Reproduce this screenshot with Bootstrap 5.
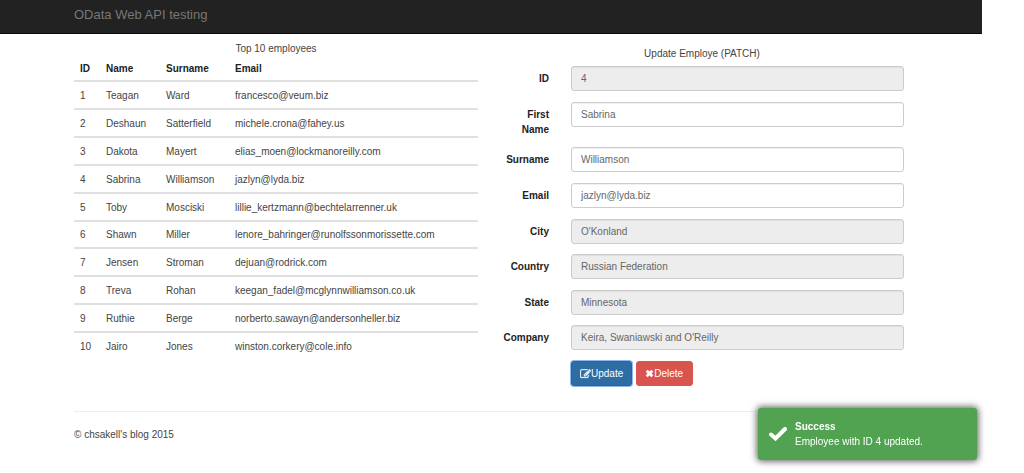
<!DOCTYPE html>
<html lang="en">
<head>
<meta charset="utf-8">
<meta name="viewport" content="width=device-width, initial-scale=1">
<title>OData Web API testing</title>
<link href="https://cdn.jsdelivr.net/npm/bootstrap@5.3.0/dist/css/bootstrap.min.css" rel="stylesheet">
<style>
  body { font: 10px/15px "Liberation Sans", Arial, sans-serif; color: #444; padding-right: 42px; background: #fff; }
  .site-bar { background: #222; border-bottom: 1px solid #080808; height: 34px; }
  .site-bar .navbar-brand { font-size: 13px; line-height: 18px; color: #777; }
  .page-width { max-width: 852px; padding-left: 11px; padding-right: 11px; }
  .page-body { padding-right: 4px; }
  .split { --bs-gutter-x: 22px; }
  .employees { height: 303px; color: inherit; caption-side: top; }
  .employees caption { color: inherit; padding: 7px 0 0; text-align: center; line-height: 15px; }
  .employees th, .employees td { padding: 5px 6px 4px; border-bottom: 0; border-top: 2px solid #e0e0e0; vertical-align: middle; line-height: 15px; }
  .employees thead th { border-top: 0; color: #222; }
  .employees tbody { border-top: 0; }
  .col-id { width: 26px; } .col-name { width: 60px; } .col-surname { width: 69px; }
  .form-title { padding-top: 12px; padding-bottom: 5px; }
  .edit-form { min-height: 320px; }
  .edit-form label { padding-top: 5px; padding-bottom: 0; font-size: 10px; font-weight: 700; line-height: 15px; color: #222; }
  .edit-form .form-control { height: 25px; padding: 4px 9px; font-size: 10px; line-height: 15px; color: #666; border-color: #ccc; border-radius: 3px; box-shadow: inset 0 1px 1px rgba(0,0,0,.06); }
  .edit-form .form-control[readonly] { background: #ededed; }
  .edit-form .btn { height: 25px; padding: 0 8px; font-size: 10px; line-height: 15px; border-radius: 3px; color: #fff; }
  .edit-form .btn-update { background: #2e6da4; border: 1px solid #28649b; box-shadow: 0 0 0 1px #8fb8ee; }
  .edit-form .btn-delete { background: #d9534f; border: 1px solid #d9534f; padding-right: 9px; }
  .page-rule { margin: 25px 0 15px; border-top: 1px solid #eee; opacity: 1; }
  .notice { right: 47px; bottom: 13px; width: 219px; padding: 11px; color: #fff; background: #51a351; border-radius: 3px; box-shadow: 0 0 7px 1px #555; }
</style>
</head>
<body>
<nav class="navbar site-bar p-0 pe-1">
  <div class="container-fluid page-width">
    <a class="navbar-brand p-0 m-0 mb-1" href="#">OData Web API testing</a>
  </div>
</nav>
<div class="page-body">
  <div class="container-fluid page-width">
    <main class="row split">
      <section class="col-6">
        <table class="table employees m-0">
          <caption>Top 10 employees</caption>
          <thead>
            <tr><th class="col-id">ID</th><th class="col-name">Name</th><th class="col-surname">Surname</th><th>Email</th></tr>
          </thead>
          <tbody>
            <tr><td>1</td><td>Teagan</td><td>Ward</td><td>francesco@veum.biz</td></tr>
            <tr><td>2</td><td>Deshaun</td><td>Satterfield</td><td>michele.crona@fahey.us</td></tr>
            <tr><td>3</td><td>Dakota</td><td>Mayert</td><td>elias_moen@lockmanoreilly.com</td></tr>
            <tr><td>4</td><td>Sabrina</td><td>Williamson</td><td>jazlyn@lyda.biz</td></tr>
            <tr><td>5</td><td>Toby</td><td>Mosciski</td><td>lillie_kertzmann@bechtelarrenner.uk</td></tr>
            <tr><td>6</td><td>Shawn</td><td>Miller</td><td>lenore_bahringer@runolfssonmorissette.com</td></tr>
            <tr><td>7</td><td>Jensen</td><td>Stroman</td><td>dejuan@rodrick.com</td></tr>
            <tr><td>8</td><td>Treva</td><td>Rohan</td><td>keegan_fadel@mcglynnwilliamson.co.uk</td></tr>
            <tr><td>9</td><td>Ruthie</td><td>Berge</td><td>norberto.sawayn@andersonheller.biz</td></tr>
            <tr><td>10</td><td>Jairo</td><td>Jones</td><td>winston.corkery@cole.info</td></tr>
          </tbody>
        </table>
      </section>
      <section class="col-6">
        <div class="form-title text-center">Update Employe (PATCH)</div>
        <form class="edit-form d-flex flex-column justify-content-between">
          <div class="row split"><label for="f-id" class="col-2 text-end">ID</label><div class="col-10"><input id="f-id" class="form-control" value="4" readonly></div></div>
          <div class="row split"><label for="f-first" class="col-2 text-end">First Name</label><div class="col-10"><input id="f-first" class="form-control" value="Sabrina"></div></div>
          <div class="row split"><label for="f-surname" class="col-2 text-end">Surname</label><div class="col-10"><input id="f-surname" class="form-control" value="Williamson"></div></div>
          <div class="row split"><label for="f-email" class="col-2 text-end">Email</label><div class="col-10"><input id="f-email" class="form-control" value="jazlyn@lyda.biz"></div></div>
          <div class="row split"><label for="f-city" class="col-2 text-end">City</label><div class="col-10"><input id="f-city" class="form-control" value="O'Konland" readonly></div></div>
          <div class="row split"><label for="f-country" class="col-2 text-end">Country</label><div class="col-10"><input id="f-country" class="form-control" value="Russian Federation" readonly></div></div>
          <div class="row split"><label for="f-state" class="col-2 text-end">State</label><div class="col-10"><input id="f-state" class="form-control" value="Minnesota" readonly></div></div>
          <div class="row split"><label for="f-company" class="col-2 text-end">Company</label><div class="col-10"><input id="f-company" class="form-control" value="Keira, Swaniawski and O'Reilly" readonly></div></div>
          <div class="row split">
            <div class="col-10 offset-2 d-flex gap-1">
              <button type="button" class="btn btn-update d-flex align-items-center"><svg width="11" height="10" viewBox="0 0 1792 1536" fill="currentColor" stroke="currentColor" stroke-width="50" aria-hidden="true"><path d="M888 1056l116-116-152-152-116 116v56h96v96zm440-720q-16-16-33 1L945 687q-17 17-1 33t33-1l350-350q17-17 1-33zm80 594v190q0 119-84 204t-204 84H288q-119 0-203-84T0 1120V288Q0 169 85 85T288 0h832q63 0 117 25 15 7 18 23 3 17-9 29l-49 49q-14 14-32 8-23-6-45-6H288q-66 0-113 47t-47 113v832q0 66 47 113t113 47h832q66 0 113-47t47-113V994q0-13 9-22l64-64q15-15 35-7t20 29zm-96-738l288 288-672 672H640V864zm444 132l-92 92-288-288 92-92q28-28 68-28t68 28l152 152q28 28 28 68t-28 68z"/></svg>Update</button>
              <button type="button" class="btn btn-delete d-flex align-items-center"><svg width="9" height="9" viewBox="0 0 16 16" aria-hidden="true"><path d="M3 3l10 10M13 3L3 13" stroke="currentColor" stroke-width="5" fill="none"/></svg>Delete</button>
            </div>
          </div>
        </form>
      </section>
    </main>
    <hr class="page-rule">
    <footer>© chsakell's blog 2015</footer>
  </div>
</div>
<div class="notice position-fixed d-flex align-items-center" role="status">
  <svg class="flex-shrink-0 me-2" width="18" height="14" viewBox="0 0 18 14" aria-hidden="true"><path d="M2 7.500l4.500 4L16 2" stroke="#fff" stroke-width="4" stroke-linecap="round" fill="none"/></svg>
  <div><strong class="d-block">Success</strong>Employee with ID 4 updated.</div>
</div>
<script src="https://cdn.jsdelivr.net/npm/bootstrap@5.3.0/dist/js/bootstrap.bundle.min.js"></script>
</body>
</html>
